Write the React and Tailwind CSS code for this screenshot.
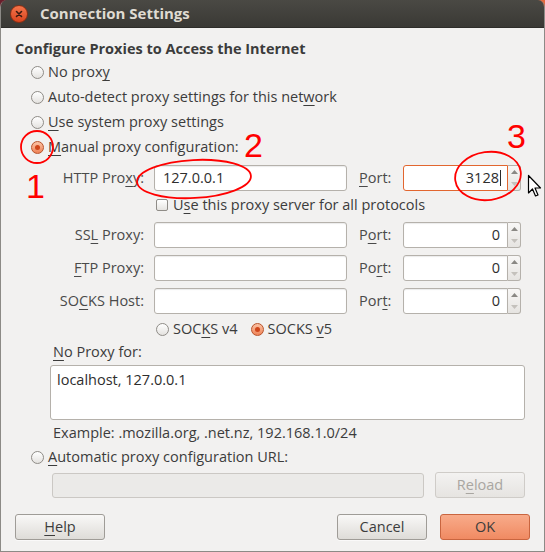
import React from "react";

const U = ({ children }) => (
  <span className="underline decoration-1 underline-offset-[3px]">{children}</span>
);

function Radio({ checked }) {
  if (checked) {
    return (
      <span className="w-[13px] h-[13px] rounded-full border border-[#b8532b] bg-gradient-to-b from-[#fbc3a5] to-[#ee8256] shrink-0 flex items-center justify-center">
        <span className="w-[5px] h-[5px] rounded-full bg-[#cf451a]" />
      </span>
    );
  }
  return (
    <span className="w-[13px] h-[13px] rounded-full border border-[#8f8c87] bg-gradient-to-b from-white to-[#e4e2df] shrink-0" />
  );
}

function RadioRow({ checked, children, h = "h-[25px]" }) {
  return (
    <div className={`flex items-center pl-[30px] ${h}`}>
      <Radio checked={checked} />
      <span className="ml-[4px]">{children}</span>
    </div>
  );
}

function TextInput({ value, w = "w-[193px]" }) {
  return (
    <div
      className={`${w} h-[26px] bg-white border border-[#b5b1ab] rounded-[3px] shadow-[inset_0_1px_1px_rgba(0,0,0,0.08)] flex items-center pl-[8px] text-[#2e2e2e]`}
    >
      {value}
    </div>
  );
}

function SpinInput({ value, focused }) {
  return (
    <div className="flex w-[118px] h-[26px]">
      <div
        className={
          focused
            ? "flex-1 flex items-center justify-end pr-[6px] bg-white border border-[#e2662f] rounded-l-[3px] text-[#2e2e2e]"
            : "flex-1 flex items-center justify-end pr-[7px] bg-white border border-[#b5b1ab] rounded-l-[3px] shadow-[inset_0_1px_1px_rgba(0,0,0,0.08)] text-[#2e2e2e]"
        }
      >
        {value}
        {focused && <span className="w-px h-[16px] bg-[#2a2a2a] ml-[1px]" />}
      </div>
      <div className="w-[13px] flex flex-col border border-l-0 border-[#b5b1ab] rounded-r-[3px] bg-gradient-to-b from-[#f8f7f6] to-[#e6e4e1]">
        <span className="flex-1 flex items-center justify-center">
          <svg width="7" height="4" viewBox="0 0 7 4">
            <path d="M0 4 L3.5 0 L7 4 Z" fill="#8a8884" />
          </svg>
        </span>
        <span className="flex-1 flex items-center justify-center">
          <svg width="7" height="4" viewBox="0 0 7 4">
            <path d="M0 0 L3.5 4 L7 0 Z" fill="#c4c1bc" />
          </svg>
        </span>
      </div>
    </div>
  );
}

function ProxyRow({ label, port, value = "", portValue = "0", focused, mt }) {
  return (
    <div className={`flex items-center h-[26px] ${mt}`}>
      <div className="w-[143px] text-right text-[#4a4a4a]">{label}</div>
      <div className="ml-[10px]">
        <TextInput value={value} />
      </div>
      <div className="ml-[12px] w-[44px] text-[#4a4a4a]">{port}</div>
      <SpinInput value={portValue} focused={focused} />
    </div>
  );
}

function Button({ children, w = "w-[90px]", ok, disabled, className = "" }) {
  let cls =
    "border-[#9f9c97] bg-gradient-to-b from-[#f9f8f7] to-[#dedcd8] text-[#3c3c3c] shadow-[0_1px_0_rgba(255,255,255,0.6)]";
  if (ok)
    cls =
      "border-[#c9653f] bg-gradient-to-b from-[#f8ab8a] to-[#f08a62] text-[#3c3c3c]";
  if (disabled)
    cls =
      "border-[#cfccc8] bg-gradient-to-b from-[#f3f2f1] to-[#e6e4e1] text-[#a9a6a1]";
  return (
    <div
      className={`${w} h-[26px] border rounded-[3px] flex items-center justify-center ${cls} ${className}`}
    >
      {children}
    </div>
  );
}

export default function App() {
  return (
    <div
      className="relative w-[545px] h-[552px] bg-[linear-gradient(90deg,#6a1e2b,#e5693c)] text-[14.5px] text-[#3c3c3c] leading-none"
      style={{ fontFamily: '"Open Sans", "Noto Sans", sans-serif' }}
    >
      <div className="w-full h-full rounded-t-[7px] overflow-hidden flex flex-col border-x border-b border-[#8c8a86]">
        {/* Title bar */}
        <div className="h-[28px] shrink-0 bg-gradient-to-b from-[#4a4944] to-[#3a3935] border-b border-[#2e2d2a] flex items-center pl-[9px]">
          <span className="w-[18px] h-[18px] rounded-full bg-gradient-to-b from-[#f5744a] to-[#d9441d] border border-[#8a2f14] flex items-center justify-center">
            <svg width="8" height="8" viewBox="0 0 8 8">
              <path d="M1.5 1.5 L6.5 6.5 M6.5 1.5 L1.5 6.5" stroke="#3a1a10" strokeWidth="1.6" strokeLinecap="round" />
            </svg>
          </span>
          <span className="ml-[12px] text-[15px] font-bold text-[#dfdbd2]">Connection Settings</span>
        </div>

        {/* Body */}
        <div className="flex-1 bg-[#f2f1f0] flex flex-col">
          <div className="mt-[12px] h-[18px] ml-[14px] flex items-center font-bold text-[#3c3c3c]">
            Configure Proxies to Access the Internet
          </div>
          <div className="mt-[2px]">
            <RadioRow>
              No prox<U>y</U>
            </RadioRow>
            <RadioRow>
              Auto-detect proxy settings for this net<U>w</U>ork
            </RadioRow>
            <RadioRow>
              <U>U</U>se system proxy settings
            </RadioRow>
            <RadioRow checked>
              <U>M</U>anual proxy configuration:
            </RadioRow>
          </div>

          <ProxyRow
            mt="mt-[5px]"
            label={<>HTTP Pro<U>x</U>y:</>}
            port={<><U>P</U>ort:</>}
            value="127.0.0.1"
            portValue="3128"
            focused
          />
          <div className="mt-[2px] h-[24px] pl-[155px] flex items-center">
            <span className="w-[12px] h-[12px] rounded-[2px] border border-[#8f8c87] bg-gradient-to-b from-white to-[#e6e4e1] shrink-0" />
            <span className="ml-[5px]">
              U<U>s</U>e this proxy server for all protocols
            </span>
          </div>
          <ProxyRow mt="mt-[5px]" label={<>SS<U>L</U> Proxy:</>} port={<>P<U>o</U>rt:</>} />
          <ProxyRow mt="mt-[7px]" label={<><U>F</U>TP Proxy:</>} port={<>Po<U>r</U>t:</>} />
          <ProxyRow mt="mt-[7px]" label={<>SO<U>C</U>KS Host:</>} port={<>Por<U>t</U>:</>} />

          <div className="mt-[5px] h-[20px] pl-[155px] flex items-center">
            <Radio />
            <span className="ml-[4px]">
              SOC<U>K</U>S v4
            </span>
            <span className="ml-[13px]">
              <Radio checked />
            </span>
            <span className="ml-[4px]">
              SOCKS <U>v</U>5
            </span>
          </div>

          <div className="mt-[4px] h-[18px] pl-[52px] flex items-center">
            <U>N</U>o Proxy for:
          </div>
          <div className="mt-[4px] ml-[49px] w-[475px] h-[55px] bg-white border border-[#b5b1ab] rounded-[3px] pl-[6px] pt-[7px] text-[#2e2e2e]">
            localhost, 127.0.0.1
          </div>
          <div className="mt-[4px] h-[18px] pl-[52px] flex items-center">
            Example: .mozilla.org, .net.nz, 192.168.1.0/24
          </div>
          <RadioRow h="h-[20px] mt-[5px]">
            <U>A</U>utomatic proxy configuration URL:
          </RadioRow>
          <div className="mt-[5px] flex items-center h-[26px]">
            <div className="ml-[51px] w-[372px] h-[25px] bg-[#ebeae8] border border-[#cbc8c4] rounded-[3px]" />
            <Button disabled className="ml-[11px]">
              R<U>e</U>load
            </Button>
          </div>
          <div className="mt-[16px] flex items-center h-[26px]">
            <Button className="ml-[14px]">
              <U>H</U>elp
            </Button>
            <div className="flex-1" />
            <Button>Cancel</Button>
            <Button ok className="ml-[13px] mr-[14px]">
              OK
            </Button>
          </div>
        </div>
      </div>

      {/* Annotations overlay */}
      <svg
        className="absolute inset-0 pointer-events-none"
        width="545"
        height="552"
        viewBox="0 0 545 552"
      >
        <circle cx="37" cy="147" r="16" fill="none" stroke="#ff0000" strokeWidth="1.8" />
        <ellipse cx="194" cy="179" rx="57" ry="19" fill="none" stroke="#ff0000" strokeWidth="1.8" transform="rotate(-3 194 179)" />
        <ellipse cx="488" cy="176" rx="33" ry="24" fill="none" stroke="#ff0000" strokeWidth="1.8" transform="rotate(-8 488 176)" />
        <text x="26" y="198" fill="#ff0000" fontSize="34" fontFamily="Liberation Sans, sans-serif">1</text>
        <text x="244" y="157" fill="#ff0000" fontSize="34" fontFamily="Liberation Sans, sans-serif">2</text>
        <text x="507" y="148" fill="#ff0000" fontSize="34" fontFamily="Liberation Sans, sans-serif">3</text>
        <path
          d="M528.5 175.5 L528.5 193 L532.5 189 L535.5 196 L538 195 L535 188 L540.5 188 Z"
          fill="#ffffff"
          stroke="#000000"
          strokeWidth="1.2"
          strokeLinejoin="round"
        />
      </svg>
    </div>
  );
}
